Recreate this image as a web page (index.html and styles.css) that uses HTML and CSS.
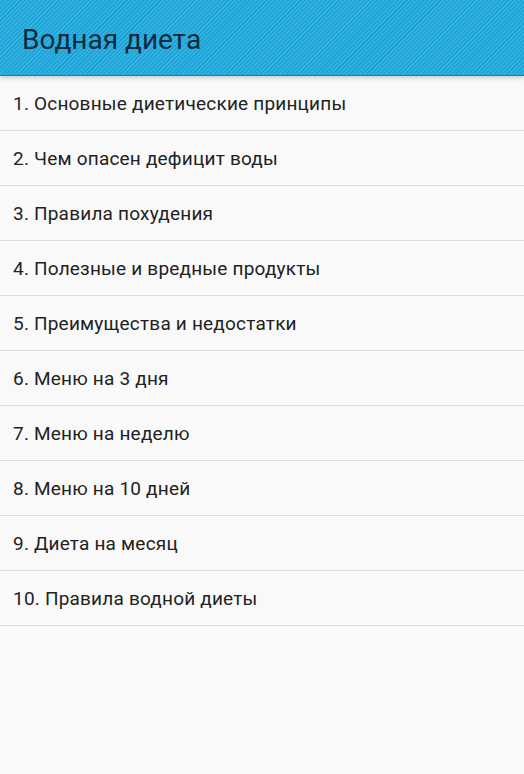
FILE: index.html
```html
<!DOCTYPE html>
<html lang="ru">
<head>
  <meta charset="UTF-8">
  <meta name="viewport" content="width=device-width, initial-scale=1.0">
  <title>Водная диета</title>
  <link rel="stylesheet" href="styles.css">
</head>
<body>
  <div class="app-bar">
    <div class="app-title">Водная диета</div>
  </div>

  <ul class="chapter-list">
    <li class="chapter-item">1. Основные диетические принципы</li>
    <li class="chapter-item">2. Чем опасен дефицит воды</li>
    <li class="chapter-item">3. Правила похудения</li>
    <li class="chapter-item">4. Полезные и вредные продукты</li>
    <li class="chapter-item">5. Преимущества и недостатки</li>
    <li class="chapter-item">6. Меню на 3 дня</li>
    <li class="chapter-item">7. Меню на неделю</li>
    <li class="chapter-item">8. Меню на 10 дней</li>
    <li class="chapter-item">9. Диета на месяц</li>
    <li class="chapter-item">10. Правила водной диеты</li>
  </ul>
</body>
</html>
```

FILE: styles.css
```css
body {
  margin: 0;
  padding: 0;
  font-family: Roboto, "Noto Sans", sans-serif;
  background-color: #f9f9f9;
  min-height: 774px;
}
.app-bar {
  position: relative;
  display: flex;
  align-items: center;
  height: 75px;
  padding-left: 22px;
  background-color: #1fa4d6;
  background-image: repeating-linear-gradient(
    -45deg,
    #1ea3d6 0px,
    #1ea3d6 1.5px,
    #33b2e1 1.5px,
    #33b2e1 3px
  );
  border-bottom: 1px solid #1a7fa8;
  box-shadow: 0 2px 4px rgba(0, 0, 0, 0.18);
  z-index: 1;
}
.app-title {
  font-size: 28px;
  color: #0e2b40;
  padding-top: 4px;
}
.chapter-list {
  list-style: none;
  margin: 0;
  padding: 0;
}
.chapter-item {
  display: flex;
  align-items: center;
  height: 54px;
  padding-left: 13px;
  font-size: 19px;
  letter-spacing: 0.2px;
  color: #222;
  border-bottom: 1px solid #dcdcdc;
}
```
